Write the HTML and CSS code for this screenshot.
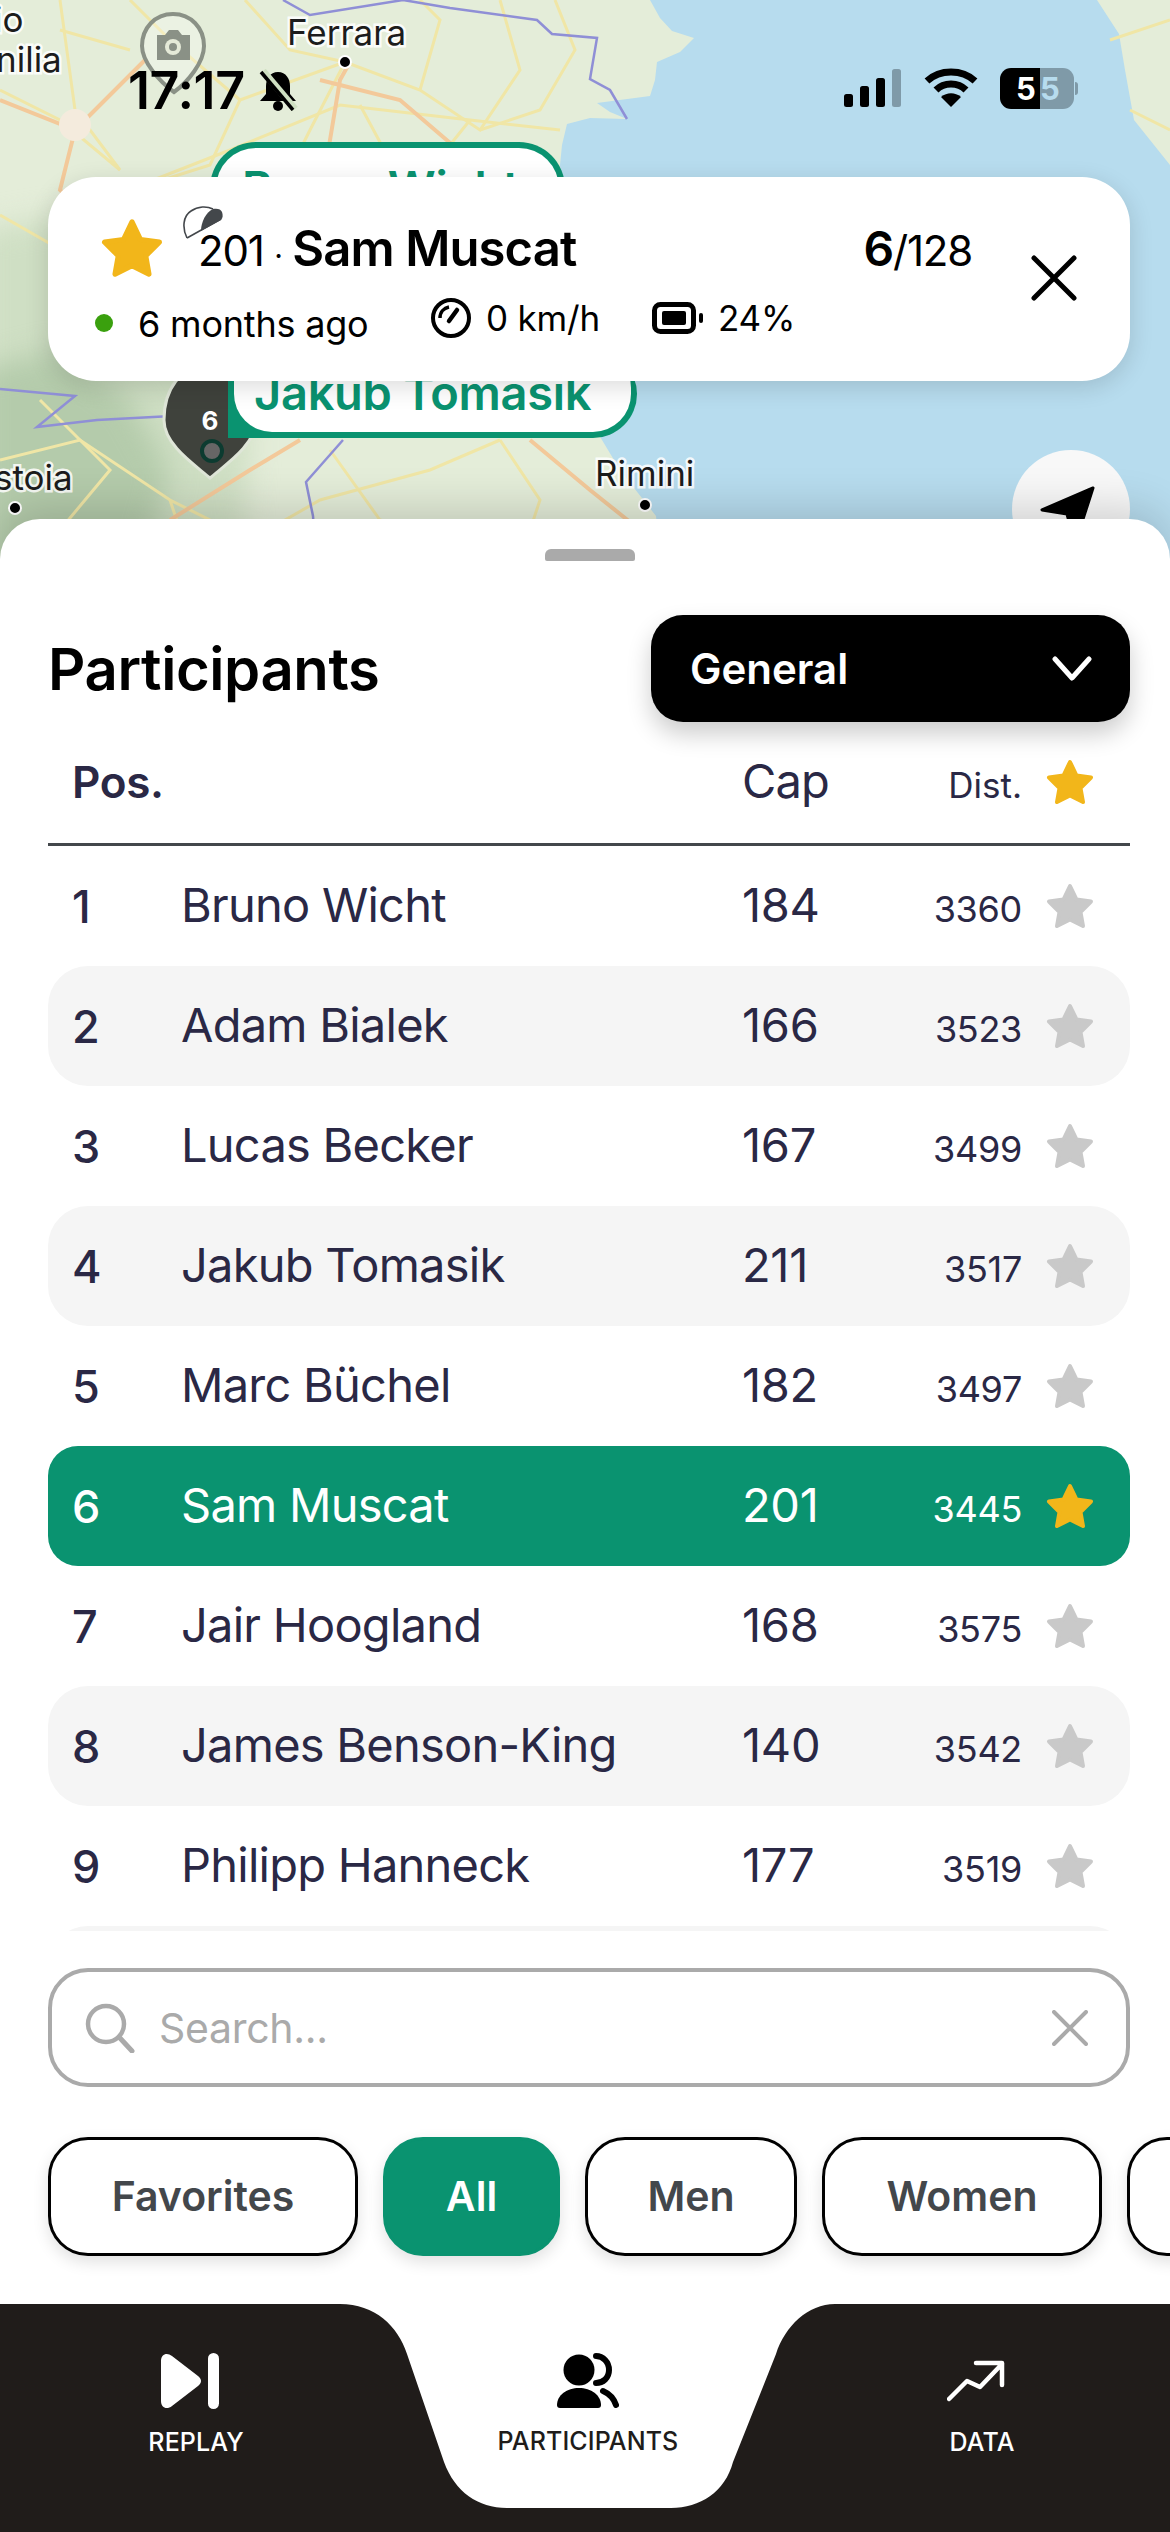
FILE: index.html
```html
<!DOCTYPE html>
<html lang="en">
<head>
<meta charset="UTF-8">
<meta name="viewport" content="width=device-width, initial-scale=1.0">
<title>Participants</title>
<link rel="stylesheet" href="styles.css">
</head>
<body>
<svg class="defs" width="0" height="0">
    <symbol id="star" viewBox="0 0 48 46">
        <path d="M24 3 L30.5 16.5 L45 18.5 L34.5 29 L37 43 L24 36.5 L11 43 L13.5 29 L3 18.5 L17.5 16.5Z" stroke-width="4" stroke-linejoin="round"/>
    </symbol>
</svg>
<div class="phone">

    <!-- map -->
    <svg class="map" viewBox="0 0 1170 560" width="1170" height="560">
        <rect width="1170" height="560" fill="#b7dcee"/>
        <path class="land" d="M0 0 L650 0 L660 18 L672 31 L694 38 L680 52 L657 62 L655 80 L650 96 L597 103 L610 112 L627 119 L590 118 L567 124 L562 145 L560 165 L570 300 L590 420 L620 470 L656 516 L660 560 L0 560Z"/>
        <path class="land" d="M1097 0 L1119 34 L1125 70 L1134 120 L1170 165 L1170 0Z"/>
        <path class="hills" d="M-20 230 L70 215 L170 260 L230 330 L250 440 L240 580 L-20 580Z"/>
        <path class="hills2" d="M-20 370 L60 350 L130 400 L170 470 L140 580 L-20 580Z"/>
        <g class="road">
            <path d="M60 0 L75 110 L120 170 L60 120 L0 90"/>
            <path d="M0 215 L70 255 L115 195 L230 150 L340 105 L470 120 L560 130"/>
            <path d="M245 0 L290 50 L345 62 L420 90 L480 130 L520 70 L500 0"/>
            <path d="M345 62 L310 130 L290 170 M360 105 L395 170 M470 120 L430 170"/>
            <path d="M115 195 L210 165 L240 100 L170 40 L130 0"/>
            <path d="M130 50 L60 30 M240 100 L345 62 M420 90 L440 20 L420 0 M480 130 L540 110 L575 50 L555 0"/>
            <path d="M0 460 L80 440 L170 500 L250 540 L320 500 L430 470 L500 440 M170 500 L190 560"/>
            <path d="M40 400 L110 470 L60 530 M330 450 L380 520 L460 540 M500 440 L540 500 L520 560"/>
            <path d="M1110 40 L1170 20 M1130 110 L1170 130"/>
        </g>
        <g class="highway">
            <path d="M0 100 L75 130 L60 190 L100 230 L130 300"/>
            <path d="M75 130 L145 60 M325 170 L340 80 L350 62"/>
            <path d="M320 80 L400 100 L470 160"/>
            <path d="M530 440 L590 490 L640 530"/>
            <path d="M170 520 L250 470 L300 440"/>
        </g>
        <circle cx="75" cy="125" r="16" fill="#f4ebdd"/>
        <g class="border">
            <path d="M283 0 L310 15 L403 0 M403 0 L450 8 L537 20 L552 34 L597 38 L590 79 L610 90 L627 119"/>
            <path d="M0 389 L75 396 L37 427 L97 420 L172 416"/>
            <path d="M343 440 L306 482 L313 516 L316 560"/>
        </g>
        <text class="place" x="-6" y="32">io</text>
        <text class="place" x="-4" y="72">nilia</text>
        <text class="place" x="287" y="45">Ferrara</text>
        <text class="place" x="595" y="486">Rimini</text>
        <text class="place" x="-6" y="490">stoia</text>
        <circle class="city" cx="345" cy="62"/>
        <circle class="city" cx="645" cy="505"/>
        <circle class="city" cx="15" cy="508"/>

        <!-- camera pin -->
        <g class="cam-pin">
            <path d="M173 14 C191 14 204 28 204 46 C204 62 188 82 174 92 C160 82 142 62 142 46 C142 28 155 14 173 14Z" fill="rgba(255,255,255,.28)" stroke="#8a9186" stroke-width="4"/>
            <path d="M157 35 H165 L169 30 H178 L182 35 H190 V60 H157Z" fill="#8a9186"/>
            <circle cx="173" cy="47" r="8" fill="#e5ead8"/>
            <circle cx="173" cy="47" r="4" fill="#8a9186"/>
        </g>

        <!-- rider pin -->
        <path d="M210 365 C240 365 256 390 256 420 C256 445 225 465 210 478 C195 465 164 445 164 420 C164 390 180 365 210 365Z" fill="#3f423c" stroke="#dfe6d8" stroke-width="3"/>
        <text class="pin-num" x="210" y="430" text-anchor="middle">6</text>
        <circle cx="212" cy="451" r="10" fill="#666" stroke="#0c3b30" stroke-width="4"/>
    </svg>

    <!-- tags on the map -->
    <div class="tag tag-bruno"><span>Bruno Wicht</span></div>
    <div class="tag tag-jakub"><span>Jakub Tomasik</span></div>

    <!-- locate button -->
    <div class="locate">
        <svg width="56" height="60" viewBox="0 0 56 60"><path d="M53 2 L2 24 L27 28 L35 58Z" fill="#000" stroke="#000" stroke-width="3" stroke-linejoin="round"/></svg>
    </div>

    <!-- status bar -->
    <div class="status">
        <div class="status-left">
            <span class="time">17:17</span>
            <svg width="42" height="42" viewBox="0 0 42 42">
                <path d="M21 3 C13 3 9 10 9 17 V25 L3 32 H39 L33 25 V17 C33 10 29 3 21 3Z" fill="#000"/>
                <circle cx="21" cy="37" r="5" fill="#000"/>
                <path d="M6 2 L38 40" stroke="#cfe0c2" stroke-width="7"/>
                <path d="M4 3 L36 41" stroke="#000" stroke-width="3.5"/>
            </svg>
        </div>
        <div class="status-right">
            <svg width="58" height="38" viewBox="0 0 58 38">
                <rect x="0" y="25" width="9" height="13" rx="2.5" fill="#000"/>
                <rect x="16" y="17" width="9" height="21" rx="2.5" fill="#000"/>
                <rect x="32" y="9" width="9" height="29" rx="2.5" fill="#000"/>
                <rect x="48" y="0" width="9" height="38" rx="2.5" fill="#7f9aa8"/>
            </svg>
            <svg width="54" height="40" viewBox="0 0 54 40">
                <path d="M3 13 C16 1 38 1 51 13 M12 22 C20 14 34 14 42 22" fill="none" stroke="#000" stroke-width="7"/>
                <path d="M27 39 L17 29 C23 24 31 24 37 29Z" fill="#000"/>
            </svg>
            <div class="battery">
                <span class="battery-level">5</span><span class="battery-rest">5</span>
                <i class="battery-nub"></i>
            </div>
        </div>
    </div>

    <!-- popup card -->
    <div class="card">
        <div class="card-main">
            <div class="card-row">
                <svg class="card-star" width="64" height="60"><use href="#star" fill="#f2b61a" stroke="#f2b61a"/></svg>
                <div class="card-title">
                    <svg class="helmet" width="41" height="34" viewBox="0 0 41 34">
                        <path d="M4 32 C-1 22 0 10 8 5 C15 0 24 0 30 3" fill="none" stroke="#43474b" stroke-width="1.6"/>
                        <path d="M4 32 L38 13" fill="none" stroke="#43474b" stroke-width="1.6"/>
                        <path d="M18 25 C18 16 23 6 30 3 C34 2 38 3 39 6 C40 9 40 12 38 14Z" fill="#43474b"/>
                    </svg>
                    <span class="cap">201</span> <span class="sep">·</span> <b>Sam Muscat</b>
                </div>
                <div class="rank"><b>6</b>/128</div>
            </div>
            <div class="card-row card-meta">
                <i class="live"></i>
                <span class="ago">6 months ago</span>
                <span class="meta">
                    <svg width="42" height="42" viewBox="0 0 42 42">
                        <circle cx="21" cy="21" r="18" fill="none" stroke="#000" stroke-width="4"/>
                        <path d="M10 21 C10 15 14 11 19 10" fill="none" stroke="#000" stroke-width="3.5"/>
                        <path d="M19 24 L27 13" stroke="#000" stroke-width="4.5" stroke-linecap="round"/>
                    </svg>
                    0 km/h
                </span>
                <span class="meta meta-batt">
                    <svg width="52" height="32" viewBox="0 0 52 32">
                        <rect x="2.5" y="2.5" width="39" height="27" rx="6" fill="none" stroke="#000" stroke-width="5"/>
                        <rect x="10" y="9" width="24" height="14" rx="2" fill="#000"/>
                        <rect x="47" y="11" width="4" height="10" rx="2" fill="#000"/>
                    </svg>
                    24%
                </span>
            </div>
        </div>
        <svg class="card-close" width="46" height="46" viewBox="0 0 46 46"><path d="M3 3 L43 43 M43 3 L3 43" stroke="#000" stroke-width="5" stroke-linecap="round"/></svg>
    </div>

    <!-- bottom sheet -->
    <div class="sheet">
        <div class="handle"></div>
        <div class="sheet-head">
            <h1>Participants</h1>
            <div class="dropdown">
                <span>General</span>
                <svg width="40" height="26" viewBox="0 0 40 26"><path d="M3 3 L20 22 L37 3" fill="none" stroke="#fff" stroke-width="5" stroke-linecap="round" stroke-linejoin="round"/></svg>
            </div>
        </div>

        <div class="table-head">
            <span class="col-pos">Pos.</span>
            <span class="col-name"></span>
            <span class="col-cap">Cap</span>
            <span class="col-dist">Dist.</span>
            <svg class="col-star" width="48" height="46"><use href="#star" fill="#f2b61a" stroke="#f2b61a"/></svg>
        </div>

        <div class="rows">
            <div class="row">
                <span class="col-pos">1</span><span class="col-name">Bruno Wicht</span><span class="col-cap">184</span><span class="col-dist">3360</span>
                <svg class="col-star" width="48" height="46"><use href="#star" fill="#c9c9c9" stroke="#c9c9c9"/></svg>
            </div>
            <div class="row alt">
                <span class="col-pos">2</span><span class="col-name">Adam Bialek</span><span class="col-cap">166</span><span class="col-dist">3523</span>
                <svg class="col-star" width="48" height="46"><use href="#star" fill="#c9c9c9" stroke="#c9c9c9"/></svg>
            </div>
            <div class="row">
                <span class="col-pos">3</span><span class="col-name">Lucas Becker</span><span class="col-cap">167</span><span class="col-dist">3499</span>
                <svg class="col-star" width="48" height="46"><use href="#star" fill="#c9c9c9" stroke="#c9c9c9"/></svg>
            </div>
            <div class="row alt">
                <span class="col-pos">4</span><span class="col-name">Jakub Tomasik</span><span class="col-cap">211</span><span class="col-dist">3517</span>
                <svg class="col-star" width="48" height="46"><use href="#star" fill="#c9c9c9" stroke="#c9c9c9"/></svg>
            </div>
            <div class="row">
                <span class="col-pos">5</span><span class="col-name">Marc Büchel</span><span class="col-cap">182</span><span class="col-dist">3497</span>
                <svg class="col-star" width="48" height="46"><use href="#star" fill="#c9c9c9" stroke="#c9c9c9"/></svg>
            </div>
            <div class="row selected">
                <span class="col-pos">6</span><span class="col-name">Sam Muscat</span><span class="col-cap">201</span><span class="col-dist">3445</span>
                <svg class="col-star" width="48" height="46"><use href="#star" fill="#f2b61a" stroke="#f2b61a"/></svg>
            </div>
            <div class="row">
                <span class="col-pos">7</span><span class="col-name">Jair Hoogland</span><span class="col-cap">168</span><span class="col-dist">3575</span>
                <svg class="col-star" width="48" height="46"><use href="#star" fill="#c9c9c9" stroke="#c9c9c9"/></svg>
            </div>
            <div class="row alt">
                <span class="col-pos">8</span><span class="col-name">James Benson-King</span><span class="col-cap">140</span><span class="col-dist">3542</span>
                <svg class="col-star" width="48" height="46"><use href="#star" fill="#c9c9c9" stroke="#c9c9c9"/></svg>
            </div>
            <div class="row">
                <span class="col-pos">9</span><span class="col-name">Philipp Hanneck</span><span class="col-cap">177</span><span class="col-dist">3519</span>
                <svg class="col-star" width="48" height="46"><use href="#star" fill="#c9c9c9" stroke="#c9c9c9"/></svg>
            </div>
            <div class="row alt"></div>
        </div>

        <div class="search">
            <svg width="50" height="50" viewBox="0 0 50 50">
                <circle cx="21" cy="21" r="18" fill="none" stroke="#aaa" stroke-width="4.5"/>
                <path d="M34 34 L47 48" stroke="#aaa" stroke-width="5" stroke-linecap="round"/>
            </svg>
            <span class="search-text">Search...</span>
            <svg width="36" height="36" viewBox="0 0 36 36"><path d="M2 2 L34 34 M34 2 L2 34" stroke="#aaa" stroke-width="4" stroke-linecap="round"/></svg>
        </div>

        <div class="chips">
            <div class="chip chip-fav">Favorites</div>
            <div class="chip chip-all active">All</div>
            <div class="chip chip-men">Men</div>
            <div class="chip chip-women">Women</div>
            <div class="chip chip-more"></div>
        </div>

        <nav class="nav">
            <svg class="nav-notch" width="1170" height="228" viewBox="0 0 1170 228">
                <path d="M300 0 H340 C375 0 398 22 407 50 L444 158 C455 188 478 204 507 204 H671 C700 204 725 188 733 158 L776 50 C785 22 808 0 835 0 H880 V-2 H300Z" fill="#fff"/>
            </svg>
            <div class="nav-item">
                <svg width="58" height="56" viewBox="0 0 58 56">
                    <path d="M0 8 C0 1 6 -1 11 3 L37 23 C41 26 41 30 37 33 L11 53 C6 57 0 55 0 48Z" fill="#fff"/>
                    <rect x="47" y="0" width="11" height="56" rx="5.5" fill="#fff"/>
                </svg>
                <span>REPLAY</span>
            </div>
            <div class="nav-item current">
                <svg width="62" height="55" viewBox="0 0 62 55">
                    <circle cx="22" cy="17" r="15.5" fill="#000"/>
                    <path d="M0 52 C0 42 10 35 22 35 C34 35 44 42 44 52 C44 54 43 55 41 55 H3 C1 55 0 54 0 52Z" fill="#000"/>
                    <path d="M39 3 C46 3 52 9 52 17 C52 25 46 30 39 30" fill="none" stroke="#000" stroke-width="6" stroke-linecap="round"/>
                    <path d="M46 38 C53 41 57 46 59 52" fill="none" stroke="#000" stroke-width="6" stroke-linecap="round"/>
                </svg>
                <span>PARTICIPANTS</span>
            </div>
            <div class="nav-item nav-data">
                <svg width="58" height="56" viewBox="0 0 58 56">
                    <g transform="translate(0 8)">
                        <path d="M2 38 L20 20 L33 26 L55 3 M29 2 H55 V24" fill="none" stroke="#fff" stroke-width="4.5" stroke-linecap="round" stroke-linejoin="round"/>
                    </g>
                </svg>
                <span>DATA</span>
            </div>
        </nav>
    </div>
</div>
</body>
</html>
```

FILE: styles.css
```css
* {
    box-sizing: border-box;
}
body {
    margin: 0;
    font-family: "Inter", "Noto Sans", sans-serif;
    background-color: #fff;
}
.defs {
    position: absolute;
}
.phone {
    position: relative;
    width: 1170px;
    height: 2532px;
    overflow: hidden;
}

/* map */
.map {
    position: absolute;
    top: 0;
    left: 0;
}
.land {
    fill: #e4edd9;
}
.hills {
    fill: #cfdfc4;
    filter: blur(14px);
}
.hills2 {
    fill: #b4cbab;
    filter: blur(14px);
}
.road path {
    fill: none;
    stroke: #f0e6a6;
    stroke-width: 3;
}
.highway path {
    fill: none;
    stroke: #f3c99a;
    stroke-width: 4;
}
.border path {
    fill: none;
    stroke: #8f8fd6;
    stroke-width: 2.5;
}
.place {
    font-size: 35px;
    fill: #1c1c1c;
    stroke: rgba(255, 255, 255, 0.85);
    stroke-width: 5px;
    paint-order: stroke;
}
.city {
    r: 6px;
    fill: #000;
    stroke: #fff;
    stroke-width: 2;
}
.pin-num {
    font-size: 26px;
    font-weight: 700;
    fill: #fff;
}
.tag {
    position: absolute;
    background-color: #0a9370;
    color: #0a9370;
    font-size: 47px;
    font-weight: 600;
    letter-spacing: -0.3px;
    white-space: nowrap;
}
.tag span {
    display: block;
    height: 100%;
    background-color: #fff;
}
.tag-bruno {
    left: 210px;
    top: 142px;
    width: 355px;
    height: 100px;
    padding: 6px;
    border-radius: 46px;
}
.tag-bruno span {
    padding: 11px 0 0 26px;
    border-radius: 40px;
}
.tag-jakub {
    left: 228px;
    top: 350px;
    width: 409px;
    height: 88px;
    padding: 0 6px 6px 6px;
    border-radius: 0 44px 44px 0;
}
.tag-jakub span {
    padding: 14px 0 0 20px;
    border-radius: 0 38px 38px 38px;
}
.locate {
    position: absolute;
    left: 1012px;
    top: 450px;
    width: 118px;
    height: 118px;
    padding: 36px 0 0 28px;
    border-radius: 50%;
    background-color: #f8f8f8;
}

/* status bar */
.status {
    position: absolute;
    top: 65px;
    left: 0;
    width: 1170px;
    height: 50px;
    padding: 0 92px 0 128px;
    display: flex;
    justify-content: space-between;
    align-items: center;
}
.status-left {
    display: flex;
    align-items: center;
    gap: 12px;
}
.time {
    font-size: 52px;
    font-weight: 600;
    letter-spacing: -0.4px;
    color: #000;
}
.status-right {
    display: flex;
    align-items: center;
    gap: 22px;
    margin-top: -4px;
}
.battery {
    position: relative;
    width: 78px;
    height: 41px;
    border-radius: 11px;
    display: flex;
    overflow: visible;
    font-size: 31px;
    font-weight: 700;
    line-height: 41px;
}
.battery-level {
    width: 40px;
    padding-left: 16px;
    background-color: #000;
    color: #fff;
    border-radius: 11px 0 0 11px;
}
.battery-rest {
    width: 34px;
    padding-left: 0;
    background-color: #7f9aa8;
    color: #b7dcee;
    border-radius: 0 11px 11px 0;
}
.battery-nub {
    position: absolute;
    right: 0;
    top: 14px;
    width: 3px;
    height: 13px;
    background-color: #7f9aa8;
    border-radius: 0 3px 3px 0;
}

/* popup card */
.card {
    position: absolute;
    left: 48px;
    top: 177px;
    width: 1082px;
    height: 204px;
    padding: 41px 53px 0 47px;
    display: flex;
    justify-content: space-between;
    background-color: #fff;
    border-radius: 48px;
    box-shadow: 0 6px 24px rgba(0, 0, 0, 0.14);
}
.card-main {
    width: 880px;
    color: #000;
}
.card-row {
    display: flex;
    align-items: center;
}
.card-star {
    margin-left: 5px;
}
.card-title {
    position: relative;
    flex: 1;
    margin-left: 34px;
    font-size: 42px;
    letter-spacing: -1.2px;
    white-space: nowrap;
}
.card-title b {
    font-size: 49px;
    font-weight: 600;
    letter-spacing: -0.9px;
}
.helmet {
    position: absolute;
    left: -15px;
    top: -13px;
}
.sep {
    font-size: 30px;
}
.rank {
    font-size: 42px;
    letter-spacing: -1.2px;
    margin-right: 3px;
}
.rank b {
    font-size: 48px;
    font-weight: 600;
}
.card-meta {
    margin-top: 18px;
    font-size: 36px;
    letter-spacing: -0.2px;
}
.live {
    width: 18px;
    height: 18px;
    border-radius: 50%;
    background-color: #3aa00e;
    margin-top: 4px;
}
.ago {
    margin-left: 25px;
    margin-top: 6px;
    width: 292px;
    white-space: nowrap;
}
.meta {
    display: flex;
    align-items: center;
    gap: 14px;
    margin-top: -6px;
    font-size: 35px;
}
.meta-batt {
    margin-left: 52px;
}
.card-close {
    margin-top: 37px;
}

/* bottom sheet */
.sheet {
    position: relative;
    margin-top: 519px;
    height: 2013px;
    background-color: #fff;
    border-radius: 40px 40px 0 0;
    box-shadow: 0 -10px 44px rgba(0, 0, 0, 0.16);
}
.handle {
    position: absolute;
    left: 545px;
    top: 30px;
    width: 90px;
    height: 12px;
    background-color: #aaa;
    border-radius: 6px 6px 2px 2px;
}
.sheet-head {
    display: flex;
    justify-content: space-between;
    align-items: center;
    padding: 96px 40px 0 48px;
}
h1 {
    margin: 0;
    font-size: 58px;
    font-weight: 600;
    letter-spacing: -0.4px;
    color: #000;
}
.dropdown {
    width: 479px;
    height: 107px;
    padding: 0 38px 0 39px;
    display: flex;
    justify-content: space-between;
    align-items: center;
    background-color: #000;
    color: #fff;
    font-size: 42px;
    font-weight: 600;
    border-radius: 32px;
    box-shadow: 0 12px 24px rgba(0, 0, 0, 0.2);
}
.table-head,
.row {
    display: flex;
    align-items: center;
    height: 120px;
    margin: 0 40px 0 48px;
    padding: 0 33px 0 24px;
    color: #2a2845;
}
.table-head {
    height: 124px;
    border-bottom: 3px solid #43474b;
    padding-bottom: 2px;
}
.table-head .col-pos {
    font-size: 44px;
    font-weight: 600;
    letter-spacing: -0.3px;
}
.table-head .col-dist {
    font-size: 35px;
    letter-spacing: 0;
}
.table-head .col-cap {
    margin-top: -2px;
    letter-spacing: -0.8px;
}
.col-pos {
    width: 109px;
    font-size: 45px;
    font-weight: 500;
}
.col-name {
    width: 561px;
    font-size: 47px;
    letter-spacing: -0.75px;
    white-space: nowrap;
    margin-top: -3px;
}
.col-cap {
    width: 180px;
    font-size: 47px;
    letter-spacing: -0.3px;
    margin-top: -3px;
}
.col-dist {
    width: 100px;
    text-align: right;
    font-size: 36px;
    margin-top: 6px;
    letter-spacing: -0.3px;
}
.col-star {
    margin-left: 24px;
}
.rows {
    height: 1085px;
    overflow: hidden;
}
.alt {
    background-color: #f5f5f5;
    border-radius: 40px;
}
.selected {
    background-color: #0a9370;
    color: #fff;
    border-radius: 30px;
}

/* search and filters */
.search {
    display: flex;
    align-items: center;
    height: 119px;
    margin: 37px 40px 0 48px;
    padding: 0 38px 0 33px;
    border: 4px solid #aaa;
    border-radius: 40px;
}
.search-text {
    flex: 1;
    margin-left: 24px;
    font-size: 41px;
    letter-spacing: -0.3px;
    color: #aaa;
}
.chips {
    display: flex;
    gap: 25px;
    height: 119px;
    margin-top: 50px;
    padding-left: 48px;
}
.chip {
    flex: none;
    display: flex;
    justify-content: center;
    align-items: center;
    padding-bottom: 2px;
    background-color: #fff;
    border: 3px solid #000;
    border-radius: 40px;
    color: #43474b;
    font-size: 41px;
    font-weight: 600;
    box-shadow: 0 6px 16px rgba(0, 0, 0, 0.12);
}
.chip-fav {
    width: 310px;
}
.chip-all {
    width: 177px;
}
.chip-men {
    width: 212px;
}
.chip-women {
    width: 280px;
}
.chip-more {
    width: 120px;
}
.chip.active {
    background-color: #0a9370;
    border-color: #0a9370;
    color: #fff;
}

/* bottom nav */
.nav {
    position: relative;
    display: grid;
    grid-template-columns: 392px 392px 386px;
    height: 228px;
    margin-top: 48px;
    background-color: #201c1a;
}
.nav-notch {
    position: absolute;
    top: 0;
    left: 0;
    overflow: visible;
}
.nav-item {
    position: relative;
    display: flex;
    flex-direction: column;
    align-items: center;
    padding-top: 49px;
    color: #fff;
    font-size: 25px;
    font-weight: 500;
    letter-spacing: 0.1px;
}
.nav-item svg {
    display: block;
    margin-right: 12px;
}
.nav-item span {
    margin-top: 18px;
}
.nav-item.current {
    color: #201c1a;
}
.nav-item.current svg {
    margin-right: 0;
}
.nav-data {
    padding-left: 10px;
}
```
